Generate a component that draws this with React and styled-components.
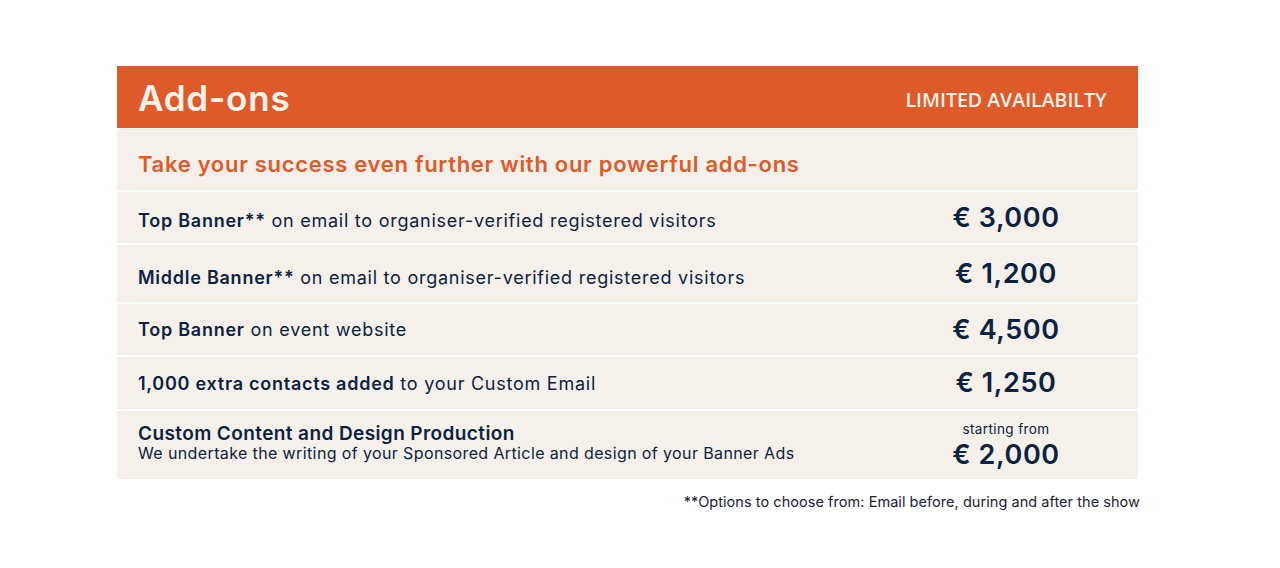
import React from "react";
import styled, { createGlobalStyle } from "styled-components";

const Global = createGlobalStyle`
  html, body { margin: 0; padding: 0; background: #ffffff; }
  body { font-family: "Inter", "Noto Sans", sans-serif; color: #0b2343; }
`;

const Page = styled.div`
  width: 1280px;
  height: 568px;
  padding: 66px 0 0 117px;
  box-sizing: border-box;
`;

const Card = styled.div`
  width: 1021px;
  display: flex;
  flex-direction: column;
  gap: 2px;
  background: #ffffff;
`;

const Header = styled.div`
  height: 62px;
  background: #df5a2a;
  display: grid;
  grid-template-columns: 1fr 264px;
  align-items: center;
  padding-left: 21px;
`;

const Title = styled.h1`
  margin: 0;
  font-family: "Inter", sans-serif;
  font-weight: 600;
  font-size: 35px;
  color: #fbf3ea;
  letter-spacing: 0.8px;
  padding-top: 2px;
`;

const Badge = styled.div`
  text-align: center;
  font-family: "Open Sans", sans-serif;
  font-weight: 600;
  font-size: 19.5px;
  color: #fbf3ea;
  padding-top: 4px;
`;

const Subtitle = styled.div`
  height: 61px;
  margin-top: -1px;
  background: #f5f0e9;
  display: flex;
  align-items: center;
  padding: 8px 0 0 21px;
  box-sizing: border-box;
  font-weight: 600;
  font-size: 22px;
  letter-spacing: 0.7px;
  color: #df5a2a;
`;

const Row = styled.div`
  height: ${(p) => p.$h}px;
  background: #f5f0e9;
  display: grid;
  grid-template-columns: 1fr 264px;
  align-items: center;
  padding-left: 21px;
`;

const Desc = styled.div`
  font-size: 18px;
  font-weight: 400;
  letter-spacing: 0.75px;
  color: #0b2343;
  padding-top: ${(p) => p.$shift || 0}px;
  padding-bottom: ${(p) => p.$lift || 0}px;
  b { font-weight: 600; }
`;

const DescTitle = styled.div`
  font-size: 19px;
  font-weight: 600;
  letter-spacing: 0.4px;
  line-height: 21px;
`;

const DescSub = styled.div`
  font-size: 16px;
  letter-spacing: 0.38px;
  line-height: 19px;
`;

const PriceBox = styled.div`
  display: flex;
  flex-direction: column;
  align-items: center;
`;

const Small = styled.div`
  font-size: 13.5px;
  letter-spacing: 0.4px;
  line-height: 16px;
  margin-bottom: 3px;
`;

const Price = styled.div`
  font-size: 27px;
  font-weight: 600;
  letter-spacing: 0.6px;
  line-height: 30px;
  color: #0b2343;
`;

const Note = styled.div`
  width: 1023px;
  text-align: right;
  margin-top: 14px;
  font-size: 14.5px;
  letter-spacing: 0.05px;
  color: #1a2238;
`;

const rows = [
  { h: 51, bold: "Top Banner**", rest: " on email to organiser-verified registered visitors", price: "€ 3,000", shift: 6 },
  { h: 57, bold: "Middle Banner**", rest: " on email to organiser-verified registered visitors", price: "€ 1,200", shift: 8 },
  { h: 51, bold: "Top Banner", rest: " on event website", price: "€ 4,500" },
  { h: 52, bold: "1,000 extra contacts added", rest: " to your Custom Email", price: "€ 1,250" },
];

export default function App() {
  return (
    <>
      <Global />
      <Page>
        <Card>
          <Header>
            <Title>Add-ons</Title>
            <Badge>LIMITED AVAILABILTY</Badge>
          </Header>
          <Subtitle>Take your success even further with our powerful add-ons</Subtitle>
          {rows.map((r) => (
            <Row key={r.price} $h={r.h}>
              <Desc $shift={r.shift}>
                <b>{r.bold}</b>
                {r.rest}
              </Desc>
              <PriceBox>
                <Price>{r.price}</Price>
              </PriceBox>
            </Row>
          ))}
          <Row $h={68}>
            <Desc $lift={4}>
              <DescTitle>Custom Content and Design Production</DescTitle>
              <DescSub>We undertake the writing of your Sponsored Article and design of your Banner Ads</DescSub>
            </Desc>
            <PriceBox>
              <Small>starting from</Small>
              <Price>€ 2,000</Price>
            </PriceBox>
          </Row>
        </Card>
        <Note>**Options to choose from: Email before, during and after the show</Note>
      </Page>
    </>
  );
}
